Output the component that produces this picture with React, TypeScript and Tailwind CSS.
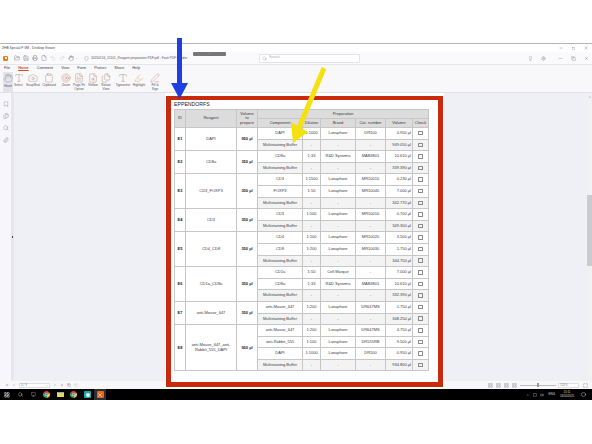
import React from "react";
import { Hand, Camera, Clipboard, FileText, FileSearch, Files as FilesIcon, Type, Highlighter, PenLine, Bookmark, Files, Search, Paperclip, FolderOpen, Save, Printer, File, Undo2, Redo2, Shield, Minus, Copy, X, Square, Lightbulb, Settings, ChevronLeft, ChevronRight, ChevronsLeft, ChevronsRight, ChevronUp, Monitor, Volume2, Circle, MessageSquare, Maximize, ChevronDown, LayoutGrid, Target } from "lucide-react";

type Row = [string, string, string, string, string];
type Group = { id: string; reagent: string; vol: string; rows: Row[] };
const B = (v: string): Row => ["Multistaining Buffer", "-", "-", "-", v];
const L = "Lunaphore";
const data: Group[] = [
  { id: "E1", reagent: "DAPI", vol: "950 µl", rows: [["DAPI", "1:1000", L, "DR100", "0.950 µl"], B("949.050 µl")] },
  { id: "E2", reagent: "CD8a", vol: "350 µl", rows: [["CD8a", "1:33", "R&D Systems", "MAB3801", "10.610 µl"], B("339.390 µl")] },
  { id: "E3", reagent: "CD3_FOXP3", vol: "350 µl", rows: [["CD3", "1:1500", L, "MR10010", "0.230 µl"], ["FOXP3", "1:50", L, "MR10040", "7.000 µl"], B("342.770 µl")] },
  { id: "E4", reagent: "CD3", vol: "350 µl", rows: [["CD3", "1:500", L, "MR10010", "0.700 µl"], B("349.300 µl")] },
  { id: "E5", reagent: "CD4_CD8", vol: "350 µl", rows: [["CD4", "1:100", L, "MR10020", "3.500 µl"], ["CD8", "1:200", L, "MR10030", "1.750 µl"], B("344.750 µl")] },
  { id: "E6", reagent: "CD1a_CD8a", vol: "350 µl", rows: [["CD1a", "1:50", "Cell Marque", "-", "7.000 µl"], ["CD8a", "1:33", "R&D Systems", "MAB3801", "10.610 µl"], B("332.390 µl")] },
  { id: "E7", reagent: "anti-Mouse_647", vol: "350 µl", rows: [["anti-Mouse_647", "1:200", L, "DR647MS", "1.750 µl"], B("348.250 µl")] },
  { id: "E8", reagent: "anti-Mouse_647_anti-Rabbit_555_DAPI", vol: "950 µl", rows: [["anti-Mouse_647", "1:200", L, "DR647MS", "4.750 µl"], ["anti-Rabbit_555", "1:100", L, "DR555RB", "9.500 µl"], ["DAPI", "1:1000", L, "DR100", "0.950 µl"], B("934.800 µl")] },
];

const cell = "border border-[#c6c6c6] text-center align-middle p-0 leading-[1.1] overflow-hidden";
const head = cell + " bg-[#dcdcdc]";

function PdfTable() {
  return (
    <table className="w-[254px] h-[262px] table-fixed border-collapse text-[4px] text-[#3a3a3a] font-['Liberation_Sans',sans-serif]">
      <colgroup>
        <col className="w-[11px]" /><col className="w-[51px]" /><col className="w-[21px]" /><col className="w-[45px]" /><col className="w-[18px]" /><col className="w-[35px]" /><col className="w-[30px]" /><col className="w-[27px]" /><col className="w-[16px]" />
      </colgroup>
      <thead>
        <tr className="h-[9px]">
          <th rowSpan={2} className={head + " font-normal"}>ID</th>
          <th rowSpan={2} className={head + " font-normal"}>Reagent</th>
          <th rowSpan={2} className={head + " font-normal"}>Volume<br />to<br />prepare</th>
          <th colSpan={6} className={head + " font-normal"}>Preparation</th>
        </tr>
        <tr className="h-[9px]">
          {["Component", "Dilution", "Brand", "Cat. number", "Volume", "Check"].map((h) => (
            <th key={h} className={head + " font-normal"}>{h}</th>
          ))}
        </tr>
      </thead>
      <tbody>
        {data.map((g) =>
          g.rows.map((r, i) => {
            const buf = r[0].startsWith("Multi");
            const bg = buf ? " bg-[#f3f3f3]" : " bg-white";
            return (
              <tr key={g.id + i} className="h-[11.6px]">
                {i === 0 && <td rowSpan={g.rows.length} className={cell + " font-bold text-[#222]"}>{g.id}</td>}
                {i === 0 && <td rowSpan={g.rows.length} className={cell + " px-[2px]"}>{g.reagent}</td>}
                {i === 0 && <td rowSpan={g.rows.length} className={cell + " font-bold text-[#222]"}>{g.vol}</td>}
                <td className={cell + bg + " whitespace-nowrap"}>{r[0]}</td>
                <td className={cell + bg}>{r[1]}</td>
                <td className={cell + bg + " whitespace-nowrap"}>{r[2]}</td>
                <td className={cell + bg}>{r[3]}</td>
                <td className={cell + bg + " !text-right pr-[1px] whitespace-nowrap"}>{r[4]}</td>
                <td className={cell + bg}><span className="inline-block w-[4.5px] h-[4.5px] rounded-[0.5px] border-[0.7px] border-[#8a8a8a] align-middle" /></td>
              </tr>
            );
          })
        )}
      </tbody>
    </table>
  );
}

const ic = "text-[#8d8d99]";
const s = { size: 10, strokeWidth: 1.1 };
const ribbon: { label: string; w: string; icon: React.ReactNode }[] = [
  { label: "Select", w: "w-[11px]", icon: <Type {...s} className="text-[#a98f7c]" /> },
  { label: "SnapShot", w: "w-[18px]", icon: <Camera {...s} className="text-[#b08f78]" /> },
  { label: "Clipboard", w: "w-[14px]", icon: <Clipboard {...s} className="text-[#b08f78]" /> },
  { label: "Zoom", w: "w-[14px] ml-[3px]", icon: <Target {...s} className="text-[#c58a6c]" /> },
  { label: "Page Fit Option", w: "w-[12px]", icon: <FileText {...s} className="text-[#b58a68]" /> },
  { label: "Reflow", w: "w-[16px]", icon: <FileSearch {...s} className="text-[#b58a68]" /> },
  { label: "Rotate View", w: "w-[10px]", icon: <FilesIcon {...s} className="text-[#b58a68]" /> },
  { label: "Typewriter", w: "w-[16px] ml-[4px]", icon: <Type {...s} className="text-[#a58468]" /> },
  { label: "Highlight", w: "w-[16px]", icon: <Highlighter {...s} className="text-[#d8a84a]" /> },
  { label: "Fill & Sign", w: "w-[14px] ml-[1px]", icon: <PenLine {...s} className="text-[#d08a6a]" /> },
];

function ChromeIcon() {
  return (
    <svg width="7" height="7" viewBox="0 0 14 14">
      <path d="M7 7 L1 3.5 A7 7 0 0 1 13 3.5 Z" fill="#e2453a" />
      <path d="M7 7 L13 3.5 A7 7 0 0 1 7 14 Z" fill="#f6c52d" />
      <path d="M7 7 L7 14 A7 7 0 0 1 1 3.5 Z" fill="#35a853" />
      <circle cx="7" cy="7" r="3.2" fill="#fff" />
      <circle cx="7" cy="7" r="2.4" fill="#4285f4" />
    </svg>
  );
}

export default function App() {
  return (
    <div className="relative w-[592px] h-[444px] bg-white overflow-hidden flex flex-col font-['Liberation_Sans',sans-serif]">
      <div className="h-[43px] shrink-0" />
      <div className="h-[346px] shrink-0 flex flex-col border-t border-[#b5b5b8] bg-[#f8f8fb]">
        {/* title bar */}
        <div className="h-[8px] shrink-0 bg-white flex items-center pl-[2px] pr-[4px] text-[3.3px] text-[#444]">
          <span>ZHB Special F VM - Desktop Viewer</span>
          <div className="ml-auto flex items-center gap-[9px] text-[#555]">
            <Minus size={4} /><Square size={3} /><X size={4} />
          </div>
        </div>
        {/* toolbar */}
        <div className="h-[13px] shrink-0 bg-[#fafafc] border-b border-[#e6e6ea] flex items-center pl-[3px] text-[3.4px] text-[#555]">
          <span className="w-[5px] h-[5px] rounded-[1px] bg-[#f07a1a] mr-[6px] flex items-center justify-center"><span className="w-[2px] h-[2px] bg-white" /></span>
          <div className={"flex items-center gap-[3px] " + ic}>
            <FolderOpen size={6} /><Save size={6} /><Printer size={6} /><File size={6} /><Undo2 size={6} className="text-[#ccc]" /><Redo2 size={6} className="text-[#ccc]" /><Hand size={6} />
            <ChevronDown size={3} className="ml-[-2px]" />
          </div>
          <Shield size={5} className={"ml-[6px] " + ic} />
          <span className="ml-[2px] w-[104px] shrink-0 text-[3.2px] whitespace-nowrap">20250516_15101_Reagent preparation PDF.pdf - Foxit PDF Reader</span>
          <div className="ml-[64px] w-[101px] h-[9px] bg-white border border-[#e2e2e8] rounded-[1px] flex items-center pl-[2px] gap-[2px] text-[#aaa]">
            <Search size={5} /><span>Search</span>
          </div>
          <div className={"ml-auto flex items-center gap-[8px] pr-[3px] " + ic}>
            <Lightbulb size={5} /><Settings size={5} /><Minus size={5} className="ml-[4px]" /><Copy size={5} /><X size={5} />
          </div>
        </div>
        {/* tabs */}
        <div className="h-[7px] shrink-0 flex items-center pl-[4px] gap-[8px] text-[3.8px] text-[#444] pt-[1px]">
          <span>File</span>
          <span className="text-[#c9501c] font-bold underline">Home</span>
          <span>Comment</span><span>View</span><span>Form</span><span>Protect</span><span>Share</span><span>Help</span>
        </div>
        {/* ribbon */}
        <div className="h-[21px] shrink-0 flex items-stretch pl-[3px] border-b border-[#e0e0e6] text-[3.2px] text-[#555]">
          <div className="w-[10px] bg-[#e3e4ea] flex flex-col items-center pt-[1px]">
            <Hand {...s} className={ic} /><span className="mt-[1px]">Hand</span>
          </div>
          {ribbon.map((r, i) => (
            <div key={i} className={r.w + " flex flex-col items-center pt-[1px] text-center leading-[1.15]"}>
              {r.icon}<span className="mt-[1px]">{r.label}</span>
            </div>
          ))}
        </div>
        {/* body */}
        <div className="flex-1 min-h-0 flex bg-[#eff0f5]">
          <div className="w-[165px] shrink-0 flex flex-col">
            <div className="flex-1 min-h-0 flex">
              <div className="w-[11px] bg-[#f7f7fb] flex flex-col items-center gap-[6px] pt-[8px] text-[#9d9da6]">
                <Bookmark size={6} /><Files size={6} /><Search size={6} /><Paperclip size={6} />
              </div>
              <div className="w-[3px] bg-[#e6e7ee] flex items-center justify-center">
                <span className="w-[1px] h-[2px] bg-[#444]" />
              </div>
              <div className="flex-1" />
            </div>
            <div className="h-[8px] bg-[#f8f8fb] flex items-center pl-[5px] gap-[3px] text-[3px] text-[#777]">
              <ChevronsLeft size={4} /><ChevronLeft size={4} />
              <span className="w-[31px] h-[5px] bg-white border border-[#ddd] flex items-center justify-between px-[1px]">3 / 3<ChevronDown size={3} /></span>
              <ChevronRight size={4} /><ChevronsRight size={4} /><Copy size={4} /><Copy size={4} className="text-[#ccc]" />
            </div>
          </div>
          <div className="w-[279px] shrink-0 bg-white pl-[1px] pr-[1px] pt-[3px]">
            <div className="h-[291px] border-x-[5px] border-t-[4px] border-b-[5px] border-[#c9290d] pl-[3px] pt-[1px]">
              <div className="text-[5.2px] leading-[6px] text-[#222] h-[6px]">EPPENDORFS</div>
              <div className="pt-[2px]"><PdfTable /></div>
            </div>
          </div>
          <div className="flex-1 min-w-0 flex flex-col">
            <div className="flex-1 min-h-0 flex justify-end">
              <div className="w-[5px] bg-[#f1f1f3] flex flex-col items-center">
                <ChevronUp size={4} className="text-[#666] mt-[2px]" />
                <div className="h-[96px]" />
                <div className="w-full h-[71px] bg-[#cbcbcf]" />
              </div>
            </div>
            <div className="h-[8px] bg-[#f8f8fb] flex items-center text-[3px] text-[#777] pl-[44px]">
              <div className="flex items-center gap-[3px] text-[#999]">
                <LayoutGrid size={5} /><LayoutGrid size={5} /><LayoutGrid size={5} /><LayoutGrid size={5} />
              </div>
              <div className="ml-[3px] w-[36px] h-[1px] bg-[#bbb] flex justify-center items-center"><span className="w-[2px] h-[4px] bg-[#999]" /></div>
              <span className="ml-[2px] w-[21px] h-[5px] bg-white border border-[#ddd] flex items-center px-[1px]">125%</span>
              <Maximize size={5} className="ml-[4px]" />
            </div>
          </div>
        </div>
      </div>
      {/* taskbar */}
      <div className="h-[11px] shrink-0 bg-black flex items-stretch text-[3px] text-[#ddd]">
        <div className="flex items-center pl-[4px]">
          <LayoutGrid size={6} className="text-white" />
          <Search size={5} className="text-[#ccc] ml-[8px]" />
          <Monitor size={5} className="text-[#999] ml-[8px]" />
          <span className="ml-[7px]"><ChromeIcon /></span>
          <span className="ml-[7px] w-[7px] h-[5px] bg-[#f2cf5b] border-t border-[#5fb7d6]" />
          <span className="ml-[6px]"><ChromeIcon /></span>
          <span className="ml-[7px] w-[7px] h-[7px] rounded-[1px] bg-[#1aa3b0] flex items-center justify-center"><span className="w-[4px] h-[4px] bg-[#f3ead0] rounded-full" /></span>
          <span className="ml-[3px] w-[12px] h-full bg-[#2c3036] flex items-center justify-center"><span className="w-[7px] h-[7px] rounded-[1px] bg-[#e8691d] flex items-center justify-center"><X size={6} className="text-white" /></span></span>
        </div>
        <div className="ml-auto flex items-center gap-[3px] pr-[6px]">
          <ChevronUp size={4} /><MessageSquare size={4} /><Volume2 size={4} />
          <span className="ml-[1px]">ENG</span>
          <span className="ml-[2px] text-center leading-[1.2] text-[2.8px]">15:11<br />16/05/2025</span>
          <Circle size={5} className="ml-[4px]" />
        </div>
      </div>
      <div className="flex-1" />

      {/* overlays: remote bar + arrows drawn on the screenshot */}
      <div className="absolute left-[193px] top-[52px] w-[33px] h-[4px] rounded-[1px] bg-[#77777b] flex items-center justify-center text-[2.5px] text-[#ddd]">···· ▪ ····</div>
      <svg className="absolute left-0 top-0 pointer-events-none" width="592" height="444" viewBox="0 0 592 444">
        <rect x="177" y="38" width="5" height="46" fill="#1f3fe0" />
        <polygon points="171,83 188,83 179.5,99" fill="#1f3fe0" />
        <line x1="324" y1="68" x2="299" y2="128" stroke="#f5e010" strokeWidth="5" />
        <polygon points="291,122 308,132 293,143" fill="#f5e010" />
      </svg>
    </div>
  );
}
